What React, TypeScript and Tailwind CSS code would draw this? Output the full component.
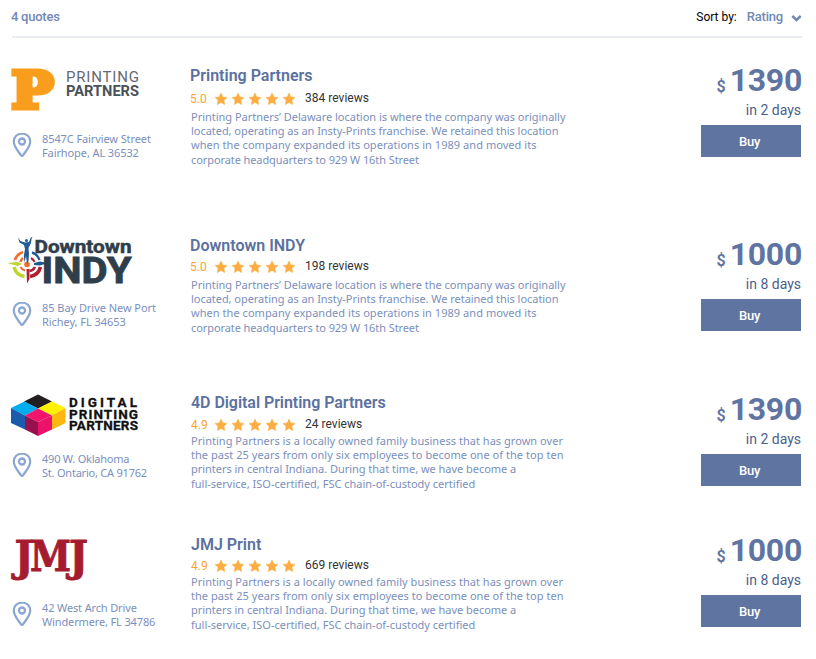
import type { ReactNode } from 'react';

const BODY = "font-['Noto_Sans','Open_Sans',sans-serif]";

function PrintingPartnersLogo() {
  return (
    <svg width="160" height="56" viewBox="0 60 160 56" className="block overflow-visible">
      <text x="11.500" y="108" fontSize="51" fontWeight="bold" fill="#f99d1c" stroke="#f99d1c" strokeWidth="5" textLength="42" lengthAdjust="spacingAndGlyphs" fontFamily="DejaVu Serif, serif">P</text>
      <text x="66" y="82" fontSize="15" fontWeight="400" fill="#656a72" textLength="73" fontFamily="Roboto, sans-serif">PRINTING</text>
      <text x="66" y="95.500" fontSize="15" fontWeight="700" fill="#4b5159" textLength="73" lengthAdjust="spacingAndGlyphs" fontFamily="Roboto, sans-serif">PARTNERS</text>
    </svg>
  );
}

function DowntownIndyLogo() {
  return (
    <svg width="160" height="56" viewBox="0 230 160 56" className="block overflow-visible">
      <g fill="none">
        <path d="M23 252A12.500 12.500 0 0 0 15 260" stroke="#f26a2e" strokeWidth="2.600" />
        <path d="M23 258A7 7 0 0 0 20.500 262" stroke="#f26a2e" strokeWidth="2.400" />
        <path d="M14 267A13 13 0 0 0 24.500 276.500" stroke="#bed62f" strokeWidth="3.400" />
        <path d="M20.500 267A7 7 0 0 0 25 270.500" stroke="#f26a2e" strokeWidth="2" />
        <path d="M40.500 267A13 13 0 0 1 30 276.500" stroke="#b31f30" strokeWidth="3.600" />
        <path d="M35 267A7 7 0 0 1 29.500 271" stroke="#b31f30" strokeWidth="2.600" />
        <path d="M32 252.500A12 12 0 0 1 39.500 260" stroke="#225b94" strokeWidth="2.400" />
        <path d="M31 258A7 7 0 0 1 34.500 262" stroke="#b31f30" strokeWidth="2.200" />
      </g>
      <path d="M7 263L18 262L22 264L18 266Z" fill="#bed62f" />
      <path d="M26.500 269L29.500 269L29.500 279L27 283.500Z" fill="#b31f30" />
      <path d="M34 263L40 261.500L48 263L40 265.500L34 265Z" fill="#225b94" />
      <circle cx="27" cy="264.500" r="2.800" fill="#f26a2e" />
      <path d="M32.500 236.500L31.500 239L31 243L28.500 248L29 254L28.500 261L27 264L26 256L24.500 262.500L23.800 256L25 249L24 245L19.500 242.500L18 237.500L20.500 241L25 242.500L29 242L30.500 238Z" fill="#225b94" />
      <circle cx="26.500" cy="240.500" r="1.500" fill="#225b94" />
      <text x="34.500" y="252.500" fontSize="17.500" fontWeight="700" fill="#2f3e4b" stroke="#2f3e4b" strokeWidth="0.500" textLength="97" lengthAdjust="spacingAndGlyphs" fontFamily="Roboto, sans-serif">Downtown</text>
      <text x="41.500" y="282.500" fontSize="36.500" fontWeight="700" fill="#2f3e4b" stroke="#2f3e4b" strokeWidth="0.900" textLength="90" lengthAdjust="spacingAndGlyphs" fontFamily="Roboto, sans-serif">INDY</text>
    </svg>
  );
}

function DigitalPartnersLogo() {
  return (
    <svg width="160" height="56" viewBox="0 388 160 56" className="block overflow-visible">
      <path d="M38 394.500L52 401.500L38 408.500L24 401.500Z" fill="#231f20" />
      <path d="M24.500 401.500L38 408.500L25 415.500L11 408Z" fill="#00adee" />
      <path d="M52 401.500L65.500 408L52 415.500L38 408.500Z" fill="#fff200" />
      <path d="M11 408L25 415.500V429.500L11 423Z" fill="#1b5bab" />
      <path d="M65.500 408L52 415.500V429.500L65.500 423Z" fill="#fcb711" />
      <path d="M38 408.500L52 415.500L38 422L25 415.500Z" fill="#f0146d" />
      <path d="M25 415.500L38 422V436L25 429.500Z" fill="#99104f" />
      <path d="M52 415.500L38 422V436L52 429.500Z" fill="#ec126c" />
      <g fill="#111" stroke="#111" strokeWidth="0.300" fontFamily="Roboto, sans-serif" fontWeight="700" fontSize="13.500">
        <text x="69" y="407" textLength="68" >DIGITAL</text>
        <text x="69" y="418.500" textLength="69">PRINTING</text>
        <text x="69" y="430" textLength="69">PARTNERS</text>
      </g>
    </svg>
  );
}

function JmjLogo() {
  return (
    <svg width="160" height="56" viewBox="0 530 160 56" className="block overflow-visible">
      <g fill="#a51c30" stroke="#a51c30" strokeWidth="1" fontFamily="DejaVu Serif, serif" fontWeight="700" fontSize="43">
        <text x="14.500" y="570.500" textLength="19" lengthAdjust="spacingAndGlyphs">J</text>
        <text x="30" y="570.500" textLength="41" lengthAdjust="spacingAndGlyphs">M</text>
        <text x="69" y="570.500" textLength="19" lengthAdjust="spacingAndGlyphs">J</text>
      </g>
    </svg>
  );
}

function Pin() {
  return (
    <svg width="20" height="26" viewBox="0 0 20 26" fill="none" stroke="#8ba6d0" className="block shrink-0">
      <path d="M10 1.500C5.200 1.500 1.800 5 1.800 9.600C1.800 14.800 6.300 19.300 8.900 23.200Q10 24.500 11.100 23.200C13.700 19.300 18.200 14.800 18.200 9.600C18.200 5 14.800 1.500 10 1.500Z" strokeWidth="2.200" />
      <circle cx="10" cy="9.500" r="3" strokeWidth="2.300" />
    </svg>
  );
}

function Star() {
  return (
    <svg width="12" height="12" viewBox="0 0 12 12" className="block">
      <path d="M6 0L7.800 3.900L12 4.400L8.900 7.300L9.700 11.600L6 9.500L2.300 11.600L3.100 7.300L0 4.400L4.200 3.900Z" fill="#fbad41" stroke="#fbad41" strokeWidth="0.500" strokeLinejoin="round" />
    </svg>
  );
}

type Line = { text: string; spacing: string };

const insty: Line[] = [
  { text: 'Printing Partners’ Delaware location is where the company was originally', spacing: 'tracking-[-0.015px]' },
  { text: 'located, operating as an Insty-Prints franchise. We retained this location', spacing: 'tracking-[-0.04px]' },
  { text: 'when the company expanded its operations in 1989 and moved its', spacing: 'tracking-[0.05px]' },
  { text: 'corporate headquarters to 929 W 16th Street', spacing: 'tracking-[-0.09px]' },
];
const family: Line[] = [
  { text: 'Printing Partners is a locally owned family business that has grown over', spacing: 'tracking-[0.03px]' },
  { text: 'the past 25 years from only six employees to become one of the top ten', spacing: 'tracking-[0.04px]' },
  { text: 'printers in central Indiana. During that time, we have become a', spacing: 'tracking-[-0.03px]' },
  { text: 'full-service, ISO-certified, FSC chain-of-custody certified', spacing: 'tracking-normal' },
];

type Quote = {
  logo: ReactNode;
  name: string;
  address: string[];
  addressSpacing: string;
  score: string;
  reviews: string;
  text: Line[];
  price: string;
  days: string;
  row: string;
  left: string;
  body: string;
  title: string;
  rating: string;
  scoreWidth: string;
  para: string;
  right: string;
};

const quotes: Quote[] = [
  { logo: <PrintingPartnersLogo />, name: 'Printing Partners', address: ['8547C Fairview Street', 'Fairhope, AL 36532'], addressSpacing: 'tracking-[-0.1px]', score: '5.0', reviews: '384 reviews', text: insty, price: '1390', days: 'in 2 days', row: 'h-[172px]', left: 'pt-[22px] gap-4', body: 'pt-7', title: '', rating: 'mt-[5px]', scoreWidth: 'w-[25px]', para: 'pt-[3px]', right: 'pt-[24px]' },
  { logo: <DowntownIndyLogo />, name: 'Downtown INDY', address: ['85 Bay Drive New Port', 'Richey, FL 34653'], addressSpacing: 'tracking-[-0.05px]', score: '5.0', reviews: '198 reviews', text: insty, price: '1000', days: 'in 8 days', row: 'h-[160px]', left: 'pt-[20px] gap-[15px]', body: 'pt-[26px]', title: '', rating: 'mt-[3px]', scoreWidth: 'w-[25px]', para: 'pt-[3px]', right: 'pt-[26px]' },
  { logo: <DigitalPartnersLogo />, name: '4D Digital Printing Partners', address: ['490 W. Oklahoma', 'St. Ontario, CA 91762'], addressSpacing: 'tracking-[-0.22px]', score: '4.9', reviews: '24 reviews', text: family, price: '1390', days: 'in 2 days', row: 'h-[145px]', left: 'pt-[18px] gap-2', body: 'pt-[23px]', title: 'pl-px tracking-[-0.05px]', rating: 'mt-[4px] pl-px', scoreWidth: 'w-6', para: 'pt-px', right: 'pt-[21px]' },
  { logo: <JmjLogo />, name: 'JMJ Print', address: ['42 West Arch Drive', 'Windermere, FL 34786'], addressSpacing: 'tracking-[-0.14px]', score: '4.9', reviews: '669 reviews', text: family, price: '1000', days: 'in 8 days', row: 'h-[144px]', left: 'pt-[15px] gap-[15px]', body: 'pt-5', title: 'pl-px', rating: 'mt-[3px] pl-px', scoreWidth: 'w-6', para: 'pt-px', right: 'pt-[17px]' },
];

function QuoteRow({ q }: { q: Quote }) {
  return (
    <article className={`flex ${q.row}`}>
      <div className={`flex w-[190px] shrink-0 flex-col ${q.left}`}>
        {q.logo}
        <div className="flex gap-[10px] pl-3">
          <Pin />
          <address className={`${BODY} text-[11px] leading-[14px] text-[#7b8fbc] not-italic ${q.addressSpacing}`}>
            {q.address.map((l) => <span key={l} className="block whitespace-nowrap">{l}</span>)}
          </address>
        </div>
      </div>
      <div className={`w-[400px] shrink-0 ${q.body}`}>
        <h2 className={`text-[16px] leading-5 font-semibold text-[#5b719f] ${q.title}`}>{q.name}</h2>
        <div className={`flex h-4 items-center justify-start ${q.rating}`}>
          <span className={`shrink-0 text-[12px] text-[#fca52c] ${q.scoreWidth}`}>{q.score}</span>
          <div className="flex w-20 shrink-0 gap-[5px]">
            {[0, 1, 2, 3, 4].map((i) => <Star key={i} />)}
          </div>
          <span className="-mt-[2px] pl-[10px] text-[12px] tracking-[0.02px] text-[#333]">{q.reviews}</span>
        </div>
        <p className={`${BODY} ${q.para} pl-px text-[11px] leading-[14.2px] text-[#7b8fbc]`}>
          {q.text.map((l) => <span key={l.text} className={`block whitespace-nowrap ${l.spacing}`}>{l.text}</span>)}
        </p>
      </div>
      <div className={`ml-auto flex w-[130px] flex-col items-end pr-[15px] ${q.right}`}>
        <div className="-mr-px flex items-end gap-1 text-[#5f74a1]">
          <span className="pb-px text-[16px] leading-5 font-semibold">$</span>
          <span className="text-[32px] leading-9 font-bold tracking-[-0.3px]">{q.price}</span>
        </div>
        <span className="mt-[2px] text-[14px] leading-5 text-[#4b5f8c]">{q.days}</span>
        <button className="mt-[5px] h-8 w-[100px] bg-[#5f74a1] pt-px pr-[3px] text-[13px] font-medium tracking-[-0.2px] text-white">Buy</button>
      </div>
    </article>
  );
}

export default function App() {
  return (
    <main className="h-[659px] w-[816px] overflow-hidden bg-white font-['Roboto',sans-serif]">
      <header className="mr-[14px] ml-3 flex h-[38px] justify-between border-b-2 border-[#e9ecf0] pt-2">
        <span className="-ml-px text-[13px] leading-[18px] font-medium tracking-[-0.25px] text-[#7388b5]">4 quotes</span>
        <div className="flex text-[12px] leading-[18px]">
          <span className="text-black">Sort by:</span>
          <span className="ml-[10px] text-[13px] font-medium tracking-[-0.2px] text-[#7388b5]">Rating</span>
          <svg width="11" height="18" viewBox="0 0 11 18" className="ml-2" fill="none" stroke="#7388b5" strokeWidth="2.500">
            <path d="M1.300 8L5.500 12L9.700 8" />
          </svg>
        </div>
      </header>
      {quotes.map((q) => <QuoteRow key={q.name} q={q} />)}
    </main>
  );
}
